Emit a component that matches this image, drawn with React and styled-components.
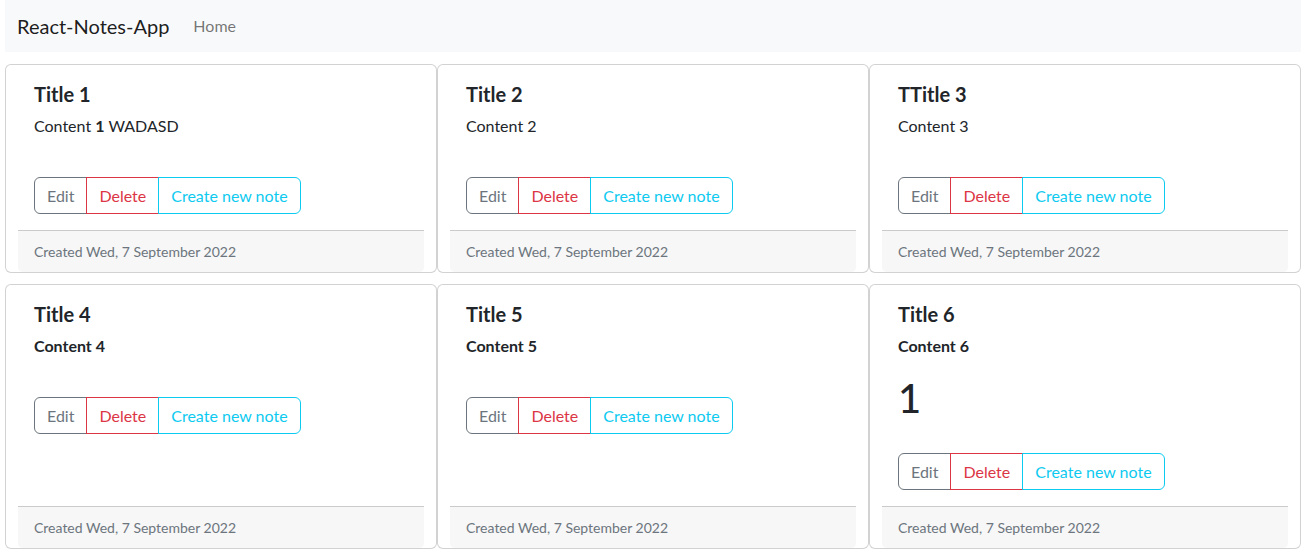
import React from 'react';
import styled, { createGlobalStyle } from 'styled-components';

const GlobalStyle = createGlobalStyle`
  body {
    margin: 0;
    background: #fff;
    font-family: Lato, "Noto Sans", sans-serif;
    font-size: 16px;
    line-height: 1.5;
    color: #212529;
  }
  * { box-sizing: border-box; }
`;

const S = {
  Page: styled.div`
    padding: 0 13px 0 5px;
  `,
  Navbar: styled.nav`
    display: flex;
    align-items: center;
    height: 52px;
    padding: 0 12px;
    background: #f8f9fa;
  `,
  Brand: styled.a`
    font-size: 20px;
    line-height: 30px;
    color: rgba(0, 0, 0, 0.9);
    margin-right: 16px;
    text-decoration: none;
  `,
  NavLink: styled.a`
    padding: 8px;
    font-size: 16px;
    color: rgba(0, 0, 0, 0.55);
    text-decoration: none;
  `,
  Grid: styled.div`
    display: grid;
    grid-template-columns: repeat(3, 1fr);
    row-gap: 11px;
    margin-top: 12px;
  `,
  Card: styled.div`
    display: flex;
    flex-direction: column;
    border: 1px solid rgba(0, 0, 0, 0.175);
    border-radius: 6px;
    padding: 0 12px;
    background: #fff;
  `,
  Body: styled.div`
    flex: 1;
    display: flex;
    flex-direction: column;
    align-items: flex-start;
    padding: 16px;
  `,
  Title: styled.h5`
    margin: 1px 0 8px;
    font-size: 20px;
    font-weight: 700;
    line-height: 1.2;
  `,
  Content: styled.div`
    display: flow-root;
    p { margin: 0 0 16px; }
    h1 {
      margin: 0 0 8px;
      font-size: 40px;
      font-weight: 500;
      line-height: 1.2;
    }
  `,
  ButtonGroup: styled.div`
    display: inline-flex;
    margin-top: 23px;
  `,
  Button: styled.button`
    font-family: inherit;
    font-size: 16px;
    line-height: 24px;
    padding: 6px 12px 5px;
    background: transparent;
    color: ${(p) => p.$color};
    border: 1px solid ${(p) => p.$color};
    border-radius: 0;
    cursor: pointer;
    & + & { margin-left: -1px; }
    &:first-child { border-radius: 6px 0 0 6px; }
    &:last-child { border-radius: 0 6px 6px 0; }
  `,
  Footer: styled.div`
    padding: 10px 16px;
    font-size: 14px;
    line-height: 21px;
    color: #6c757d;
    background: #f7f7f7;
    border-top: 1px solid rgba(0, 0, 0, 0.175);
    border-radius: 0 0 5px 5px;
  `,
};

const notes = [
  { title: 'Title 1', content: <p>Content <b>1</b> WADASD</p> },
  { title: 'Title 2', content: <p>Content 2</p> },
  { title: 'TTitle 3', content: <p>Content 3</p> },
  { title: 'Title 4', content: <p><b>Content 4</b></p> },
  { title: 'Title 5', content: <p><b>Content 5</b></p> },
  {
    title: 'Title 6',
    content: (
      <>
        <p><b>Content 6</b></p>
        <h1>1</h1>
      </>
    ),
  },
];

function App() {
  return (
    <S.Page>
      <GlobalStyle />
      <S.Navbar>
        <S.Brand href="#">React-Notes-App</S.Brand>
        <S.NavLink href="#">Home</S.NavLink>
      </S.Navbar>
      <S.Grid>
        {notes.map((note, i) => (
          <S.Card key={i}>
            <S.Body>
              <S.Title>{note.title}</S.Title>
              <S.Content>{note.content}</S.Content>
              <S.ButtonGroup>
                <S.Button $color="#6c757d">Edit</S.Button>
                <S.Button $color="#dc3545">Delete</S.Button>
                <S.Button $color="#0dcaf0">Create new note</S.Button>
              </S.ButtonGroup>
            </S.Body>
            <S.Footer>Created Wed, 7 September 2022</S.Footer>
          </S.Card>
        ))}
      </S.Grid>
    </S.Page>
  );
}

export default App;
